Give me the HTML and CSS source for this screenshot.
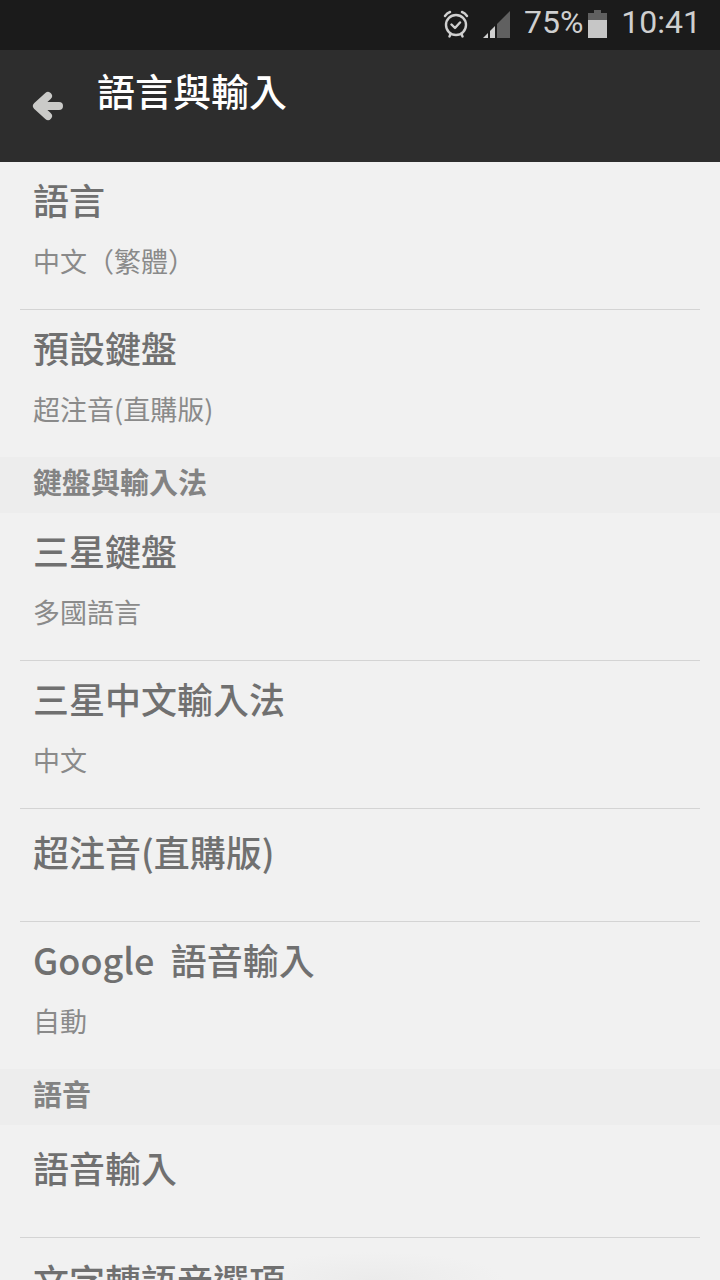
FILE: index.html
```html
<!DOCTYPE html>
<html lang="zh-Hant">
<head>
  <meta charset="UTF-8" />
  <title>語言與輸入</title>
  <meta name="viewport" content="width=device-width, initial-scale=1" />
  <link rel="stylesheet" href="styles.css">
</head>
<body>
  <div class="screen">
    <div class="status-bar">
      <svg class="alarm-icon" width="26" height="28" viewBox="0 0 26 28" fill="none" stroke="#cfcfcf" stroke-width="2.4" stroke-linecap="round" stroke-linejoin="round">
        <circle cx="13" cy="15" r="10" />
        <path d="M8.5 14.5l3.500 3.500 5-5.500M2 6q2-3 5-4M24 6q-2-3-5-4M7.500 24l-1 2.500M18.500 24l1 2.500" />
      </svg>
      <svg class="signal-icon" width="27" height="27" viewBox="0 0 27 27">
        <path d="M0 27l5-5v5z" fill="#cfcfcf" />
        <path d="M7 27v-7l5-5v12z" fill="#cfcfcf" />
        <path d="M14 27V13L27 0v27z" fill="#606060" />
      </svg>
      <span class="percent">75%</span>
      <svg class="battery-icon" width="19" height="28" viewBox="0 0 19 28">
        <path d="M0 3h6V0h7v3h6v7H0z" fill="#606060" />
        <path d="M0 10h19v18H0z" fill="#c6c6c6" />
      </svg>
      <span class="clock">10:41</span>
    </div>

    <header class="app-bar">
      <button class="back-btn" type="button" aria-label="返回">
        <svg width="32" height="30" viewBox="0 0 32 30" fill="none" stroke="#cacac8" stroke-width="8" stroke-linecap="round" stroke-linejoin="round">
          <path d="M16 5L5 15l11 10M6 15h21" />
        </svg>
      </button>
      <h1>語言與輸入</h1>
    </header>

    <main class="settings">
      <section class="group">
        <a class="row" href="#">
          <span class="name">語言</span>
          <span class="value">中文（繁體）</span>
        </a>
        <a class="row" href="#">
          <span class="name">預設鍵盤</span>
          <span class="value">超注音(直購版)</span>
        </a>
      </section>

      <h2>鍵盤與輸入法</h2>
      <section class="group">
        <a class="row" href="#">
          <span class="name">三星鍵盤</span>
          <span class="value">多國語言</span>
        </a>
        <a class="row" href="#">
          <span class="name">三星中文輸入法</span>
          <span class="value">中文</span>
        </a>
        <a class="row single" href="#">
          <span class="name">超注音(直購版)</span>
        </a>
        <a class="row" href="#">
          <span class="name">Google&nbsp; 語音輸入</span>
          <span class="value">自動</span>
        </a>
      </section>

      <h2>語音</h2>
      <section class="group">
        <a class="row single" href="#">
          <span class="name">語音輸入</span>
        </a>
        <a class="row single" href="#">
          <span class="name">文字轉語音選項</span>
        </a>
      </section>
    </main>
  </div>
</body>
</html>
```
FILE: styles.css
```css
* {
  box-sizing: border-box;
}

body {
  margin: 0;
  font-family: "Noto Sans CJK TC", sans-serif;
  background: #f1f1f1;
  color: #707070;
}

.screen {
  display: flex;
  flex-direction: column;
  height: 100vh;
  overflow: hidden;
}

/* status bar */
.status-bar {
  display: flex;
  flex-shrink: 0;
  align-items: center;
  justify-content: flex-end;
  height: 50px;
  padding: 0 19px 2px;
  background: #1b1b1b;
  color: #cfcfcf;
  font-family: Roboto, sans-serif;
  font-size: 32px;
  line-height: 40px;
}

.percent,
.clock {
  padding-bottom: 4px;
}

.signal-icon {
  margin: 0 14px;
}

.battery-icon {
  margin: 0 14px 0 5px;
}

/* title bar */
.app-bar {
  display: flex;
  flex-shrink: 0;
  align-items: center;
  gap: 33px;
  height: 112px;
  padding-left: 32px;
  background: #2d2d2d;
}

.back-btn {
  padding: 0;
  border: none;
  background: none;
  cursor: pointer;
}

.back-btn svg {
  display: block;
}

h1 {
  margin: 0;
  padding-bottom: 32px;
  color: #fff;
  font-size: 38px;
  font-weight: 500;
  line-height: 44px;
}

/* list */
.settings {
  flex: 1;
  overflow: hidden;
  background: radial-gradient(ellipse 130px 28px at 52% 100%, #ebebeb, #f1f1f1);
}

h2 {
  margin: 0;
  padding: 6px 33px 14px;
  background: #ededed;
  color: #838383;
  font-size: 29px;
  font-weight: 700;
  line-height: 36px;
}

.row {
  display: flex;
  flex-direction: column;
  gap: 23px;
  margin: 0 20px;
  padding: 15px 13px 31px;
  border-bottom: 1px solid #d4d4d4;
  color: inherit;
  text-decoration: none;
}

.row.single {
  padding: 20px 13px 48px;
}

.row:last-child {
  border-bottom: none;
}

.name {
  font-size: 36px;
  font-weight: 500;
  line-height: 44px;
}

.value {
  color: #8a8a8a;
  font-size: 27px;
  line-height: 34px;
}
```
